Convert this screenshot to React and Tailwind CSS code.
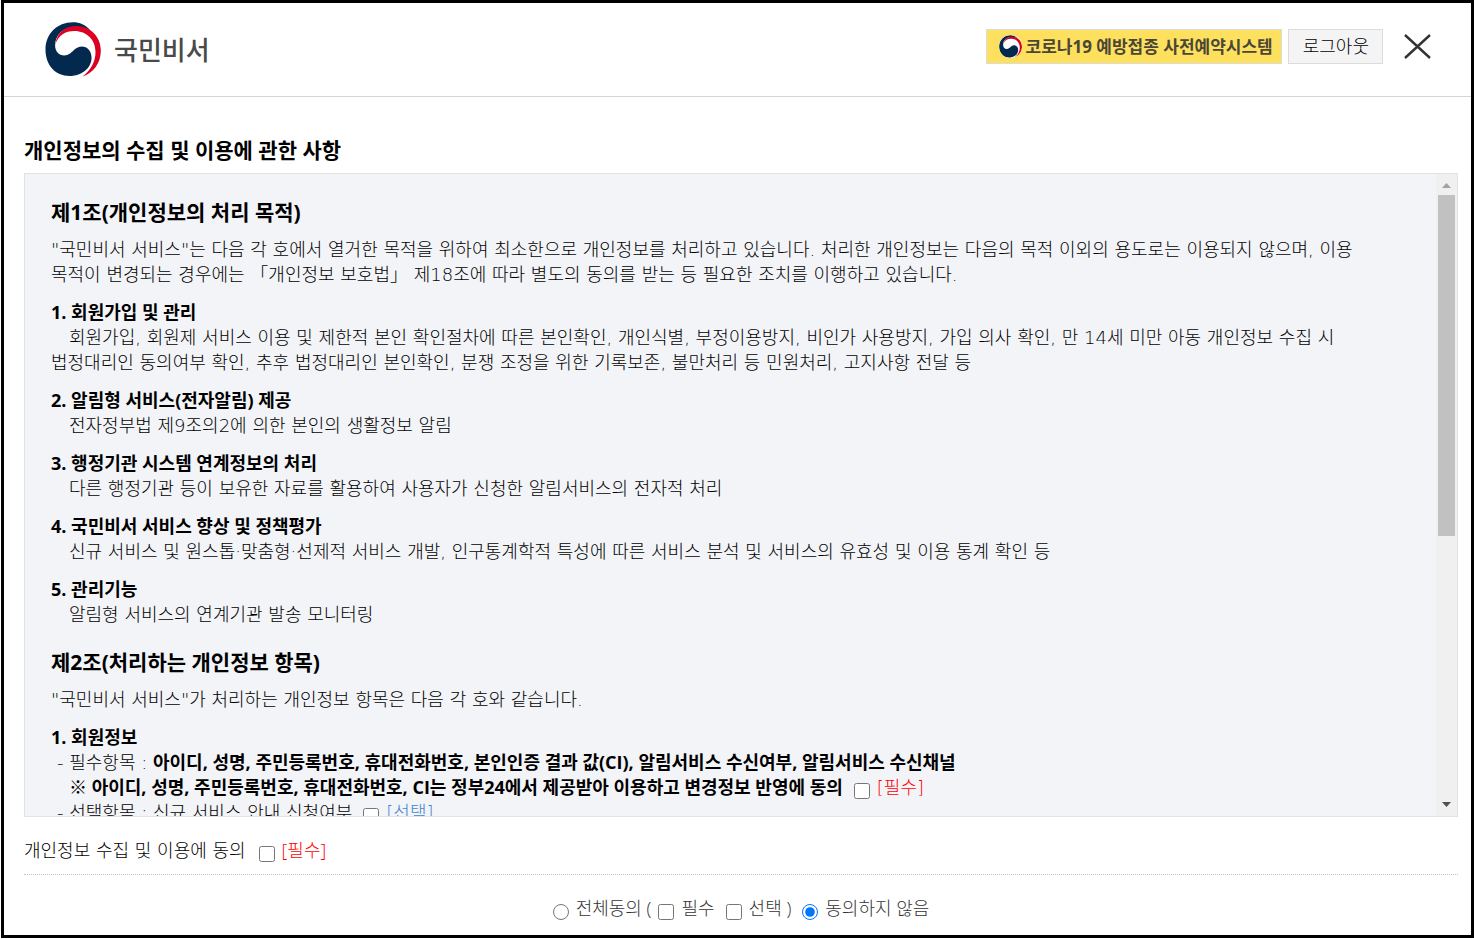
import { useState } from "react";

const PURPOSES = [
  {
    title: "1. 회원가입 및 관리",
    lines: [
      "회원가입, 회원제 서비스 이용 및 제한적 본인 확인절차에 따른 본인확인, 개인식별, 부정이용방지, 비인가 사용방지, 가입 의사 확인, 만 14세 미만 아동 개인정보 수집 시",
      "법정대리인 동의여부 확인, 추후 법정대리인 본인확인, 분쟁 조정을 위한 기록보존, 불만처리 등 민원처리, 고지사항 전달 등",
    ],
  },
  {
    title: "2. 알림형 서비스(전자알림) 제공",
    lines: ["전자정부법 제9조의2에 의한 본인의 생활정보 알림"],
  },
  {
    title: "3. 행정기관 시스템 연계정보의 처리",
    lines: ["다른 행정기관 등이 보유한 자료를 활용하여 사용자가 신청한 알림서비스의 전자적 처리"],
  },
  {
    title: "4. 국민비서 서비스 향상 및 정책평가",
    lines: ["신규 서비스 및 원스톱·맞춤형·선제적 서비스 개발, 인구통계학적 특성에 따른 서비스 분석 및 서비스의 유효성 및 이용 통계 확인 등"],
  },
  {
    title: "5. 관리기능",
    lines: ["알림형 서비스의 연계기관 발송 모니터링"],
  },
];

function Emblem({ className }) {
  return (
    <svg viewBox="0 0 168 166" className={className} aria-hidden="true">
      <path
        fill="#03294f"
        d="M136 25 C122 9 104 1 84 1 C36 1 1 36 1 84 C1 130 30 163 74 163 C112 163 140 138 140 108 C140 88 128 74 110 74 C86 74 82 101 58 101 C40 101 30 88 30 70 C30 38 56 14 92 14 C109 14 124 18 136 25 Z"
      />
      <path
        fill="#dc0023"
        d="M31 66 C36 30 62 12 94 12 C138 12 168 46 168 86 C168 124 146 154 112 165 C138 146 152 120 152 90 C152 54 126 27 88 27 C60 27 41 40 31 66 Z"
      />
    </svg>
  );
}

function Check({ id, label, className = "", type = "checkbox", ...rest }) {
  return (
    <>
      <input id={id} type={type} className="size-4 shrink-0 relative top-[3px]" {...rest} />
      <label htmlFor={id} className={className}>{label}</label>
    </>
  );
}

export default function App() {
  const [choice, setChoice] = useState("none");

  return (
    <div className="h-screen pl-px pb-px bg-white font-light text-black text-[18px] leading-[25px] break-keep font-['DejaVu_Sans','Noto_Sans_CJK_KR',sans-serif]">
      <div className="flex h-full flex-col border-[3px] border-black">
        {/* Header */}
        <header className="flex shrink-0 items-center justify-between border-b border-[#d5d5d5] h-[94px] pl-[41px] pr-10 font-['Open_Sans','Noto_Sans_CJK_KR',sans-serif]">
          <a href="#" className="flex items-center gap-[13px]">
            <Emblem className="h-[55px] w-14" />
            <span className="text-[26px] leading-8 font-medium text-[#4a4a4a]">국민비서</span>
          </a>
          <div className="flex items-center pb-1.5">
            <a
              href="#"
              className="flex h-[35px] items-center gap-1 border border-[#dcdcdc] bg-[#fce05e] pl-3 pr-2 text-[17px] font-bold text-[#4c4636]"
            >
              <Emblem className="size-[23px] rounded-full bg-white" />
              코로나19 예방접종 사전예약시스템
            </a>
            <button type="button" className="ml-1.5 h-[35px] border border-[#dcdcdc] bg-[#f4f4f4] pl-3.5 pr-[13px]">로그아웃</button>
            <button type="button" aria-label="닫기" className="ml-[21px]">
              <svg viewBox="0 0 27 25" className="h-[25px] w-[27px]" fill="none" stroke="#333" strokeWidth="2.4">
                <path d="M1 1 L26 24 M26 1 L1 24" />
              </svg>
            </button>
          </div>
        </header>

        <main className="flex min-h-0 flex-1 flex-col pl-5 pr-[13px] pt-[41px]">
          <h1 className="text-[21px] leading-[25px] font-bold font-['Open_Sans','Noto_Sans_CJK_KR',sans-serif]">개인정보의 수집 및 이용에 관한 사항</h1>

          {/* Terms */}
          <div className="mt-[10px] flex min-h-0 flex-1 border border-[#e3e3e3] bg-[#f3f4f8]">
            <div className="min-w-0 flex-1 overflow-y-auto px-[26px] pt-[26px] pb-6 [scrollbar-width:none]" tabIndex={0}>
              <h2 className="text-[21px] leading-[25px] font-bold font-['Open_Sans','Noto_Sans_CJK_KR',sans-serif]">제1조(개인정보의 처리 목적)</h2>
              <p className="mt-3">
                "국민비서 서비스"는 다음 각 호에서 열거한 목적을 위하여 최소한으로 개인정보를 처리하고 있습니다. 처리한 개인정보는 다음의 목적 이외의 용도로는 이용되지 않으며, 이용
                <br />
                목적이 변경되는 경우에는 「개인정보 보호법」 제18조에 따라 별도의 동의를 받는 등 필요한 조치를 이행하고 있습니다.
              </p>
              {PURPOSES.map((item) => (
                <section key={item.title} className="mt-[13px]">
                  <h3 className="font-bold font-['Open_Sans','Noto_Sans_CJK_KR',sans-serif]">{item.title}</h3>
                  {item.lines.map((line, i) => (
                    <p key={line} className={i === 0 ? "indent-[18px]" : ""}>{line}</p>
                  ))}
                </section>
              ))}

              <h2 className="mt-[23px] text-[21px] leading-[25px] font-bold font-['Open_Sans','Noto_Sans_CJK_KR',sans-serif]">제2조(처리하는 개인정보 항목)</h2>
              <p className="mt-3">"국민비서 서비스"가 처리하는 개인정보 항목은 다음 각 호와 같습니다.</p>
              <section className="mt-[13px]">
                <h3 className="font-bold font-['Open_Sans','Noto_Sans_CJK_KR',sans-serif]">1. 회원정보</h3>
                <p className="pl-1.5">
                  - 필수항목 : <strong className="font-bold font-['Open_Sans','Noto_Sans_CJK_KR',sans-serif]">아이디, 성명, 주민등록번호, 휴대전화번호, 본인인증 결과 값(CI), 알림서비스 수신여부, 알림서비스 수신채널</strong>
                </p>
                <div className="flex items-center gap-[7px] pl-[18px]">
                  <strong className="mr-1 font-bold font-['Open_Sans','Noto_Sans_CJK_KR',sans-serif]">※ 아이디, 성명, 주민등록번호, 휴대전화번호, CI는 정부24에서 제공받아 이용하고 변경정보 반영에 동의</strong>
                  <Check id="gov24" label="[필수]" className="text-[#ff0000]" />
                </div>
                <div className="flex items-center gap-[7px] pl-1.5">
                  <span className="mr-1">- 선택항목 : 신규 서비스 안내 신청여부</span>
                  <Check id="news" label="[선택]" className="text-[#3f86d0]" />
                </div>
              </section>
            </div>

            {/* Scroll bar */}
            <div className="flex w-[21px] shrink-0 flex-col items-center bg-[#f0f0f0] py-[9px]" aria-hidden="true">
              <svg viewBox="0 0 9 5" className="h-[5px] w-[9px]"><path d="M0 5 L4.5 0 L9 5 Z" fill="#a3a3a3" /></svg>
              <div className="mt-[7px] mb-2 flex min-h-0 w-full flex-1 flex-col px-0.5">
                <div className="h-[57%] bg-[#c1c1c1]" />
              </div>
              <svg viewBox="0 0 9 5" className="h-[5px] w-[9px]"><path d="M0 0 L4.5 5 L9 0 Z" fill="#505050" /></svg>
            </div>
          </div>

          <div className="flex shrink-0 items-center gap-[7px] border-b border-dotted border-[#c4c4c4] pt-[21px] pb-[11px]">
            <span className="mr-1.5">개인정보 수집 및 이용에 동의</span>
            <Check id="agree" label="[필수]" className="text-[#ff0000] font-['Open_Sans','Noto_Sans_CJK_KR',sans-serif]" />
          </div>

          {/* Agree to all */}
          <div className="flex shrink-0 items-center justify-center gap-[7px] pt-[21px] pb-3.5 text-[#333] font-['Open_Sans','Noto_Sans_CJK_KR',sans-serif]">
            <Check id="all" type="radio" name="agree-all" label="전체동의 (" checked={choice === "all"} onChange={() => setChoice("all")} />
            <Check id="all-required" label="필수" className="mr-1" />
            <Check id="all-optional" label="선택 )" className="mr-1" />
            <Check id="none" type="radio" name="agree-all" label="동의하지 않음" checked={choice === "none"} onChange={() => setChoice("none")} />
          </div>
        </main>
      </div>
    </div>
  );
}
